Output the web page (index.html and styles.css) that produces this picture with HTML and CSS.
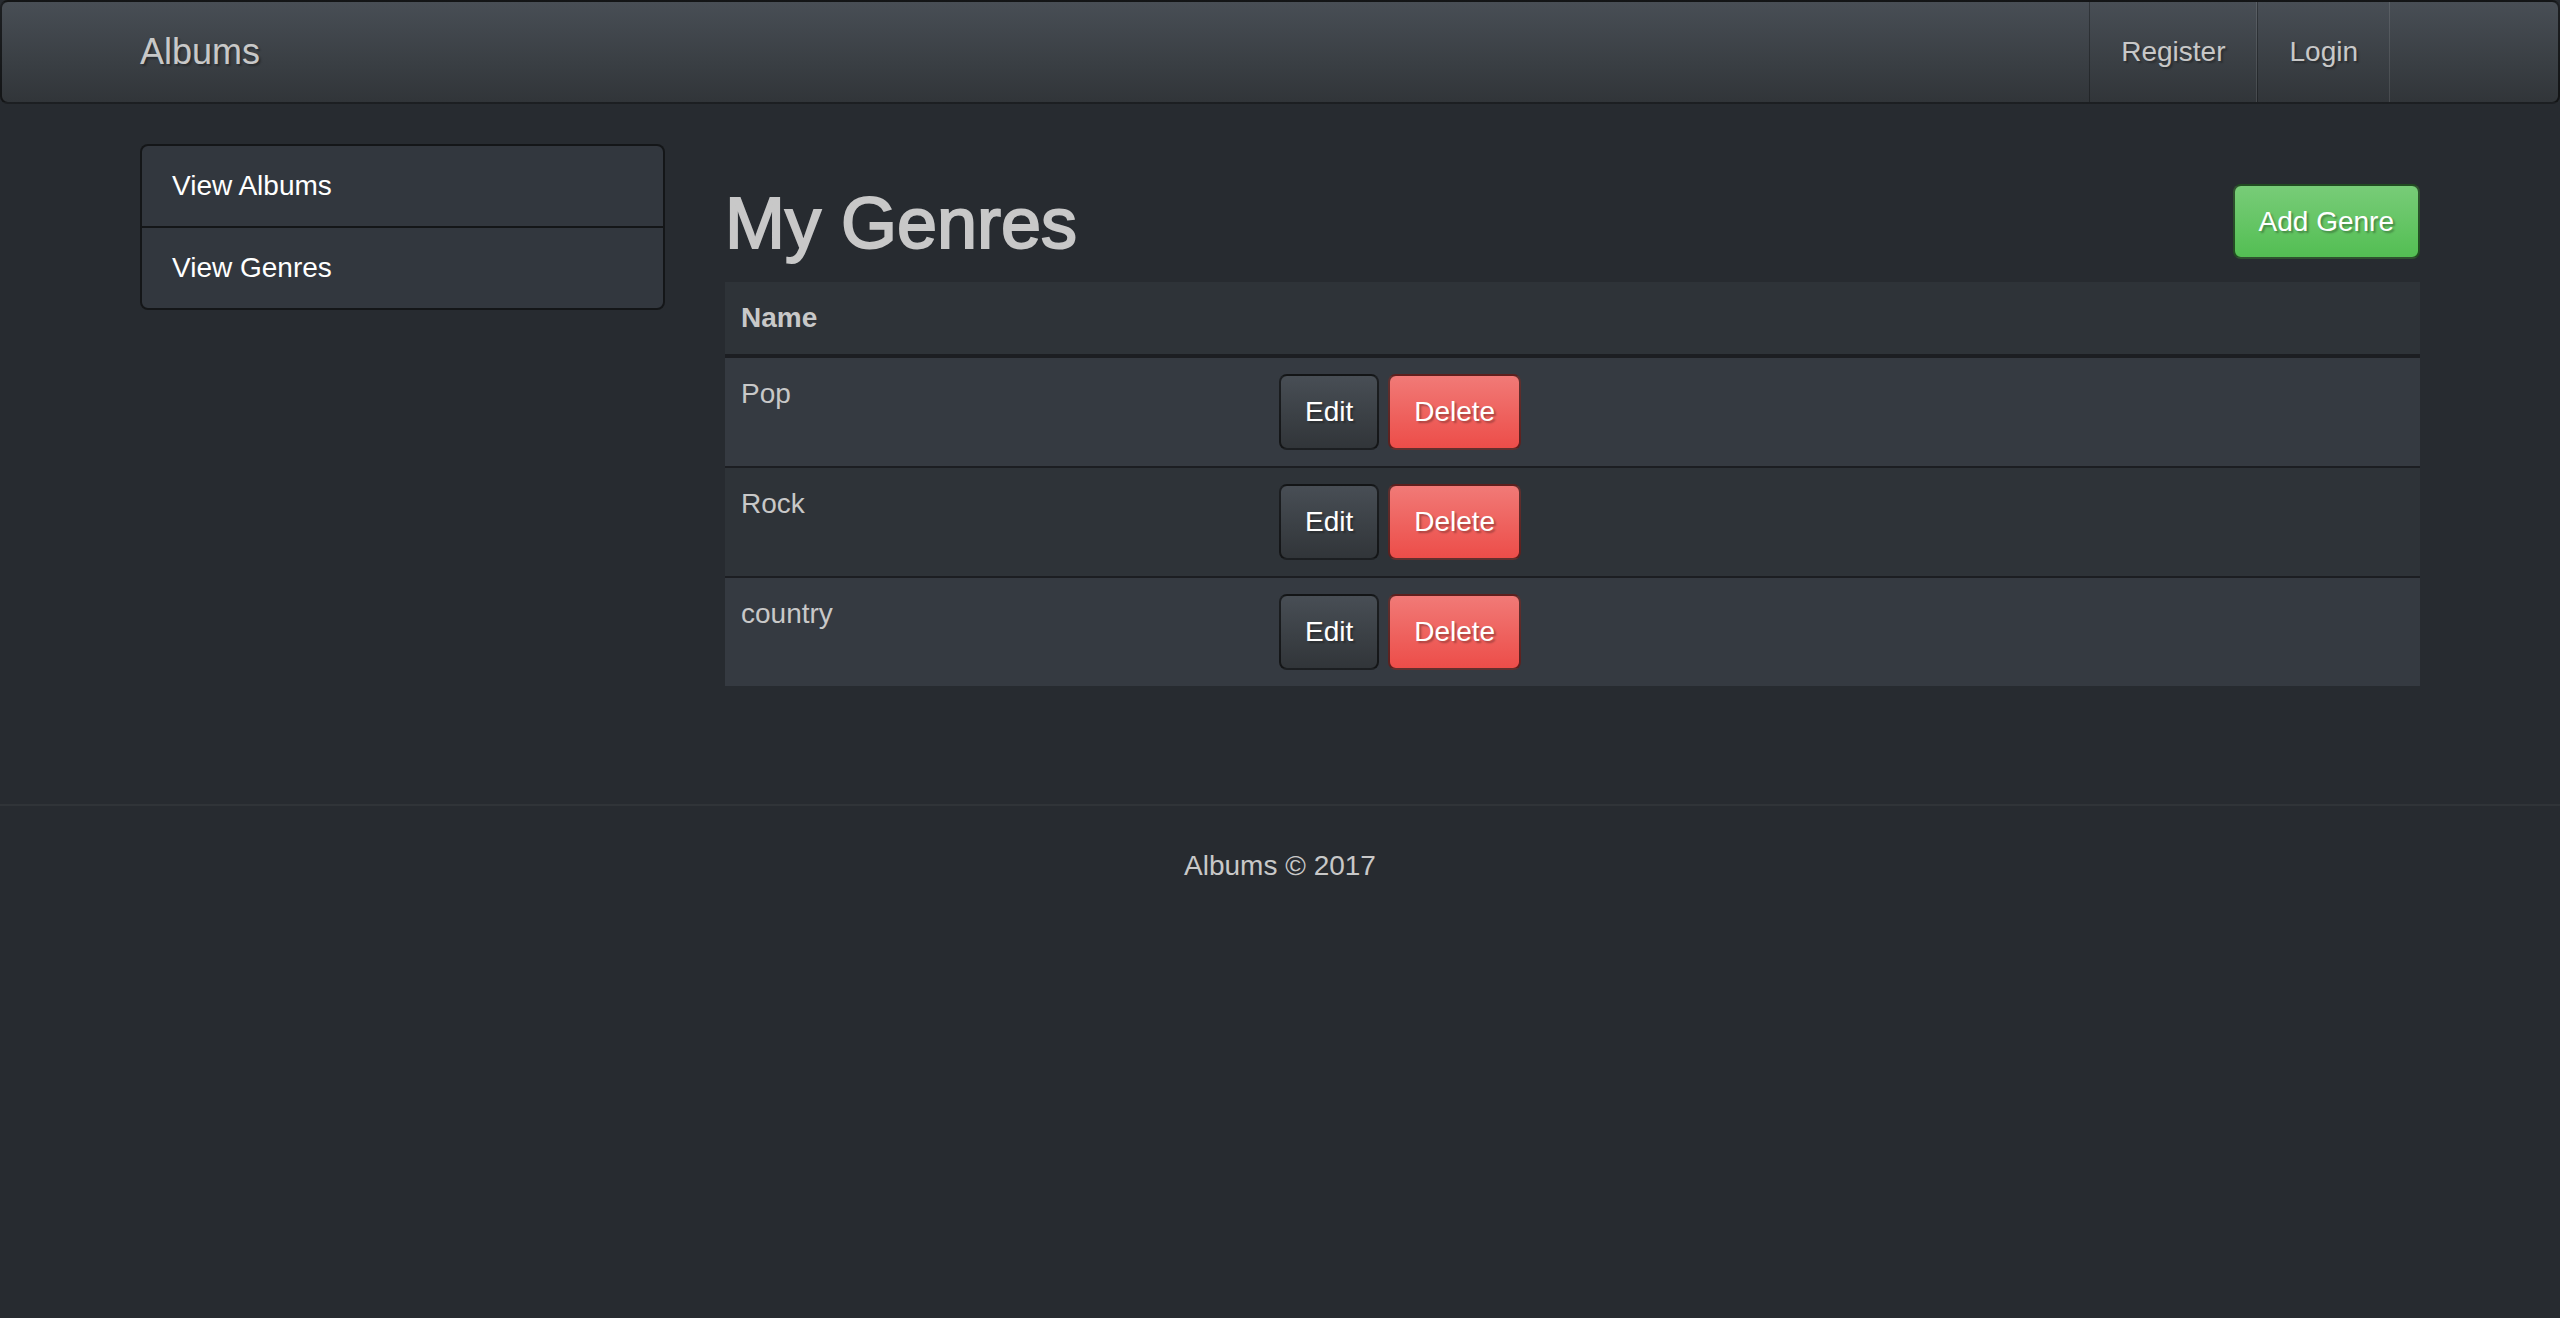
FILE: index.html
```html
<!DOCTYPE html>
<html lang="en">
<head>
<meta charset="utf-8">
<title>Albums</title>
<link rel="stylesheet" href="styles.css">
</head>
<body>
<nav class="navbar">
  <div class="navbar-inner">
    <a class="brand" href="#">Albums</a>
    <ul class="nav">
      <li><a href="#">Register</a></li>
      <li><a href="#">Login</a></li>
    </ul>
  </div>
</nav>
<div class="container">
  <aside class="list-group">
    <a class="list-item" href="#">View Albums</a>
    <a class="list-item" href="#">View Genres</a>
  </aside>
  <main class="main">
    <div class="page-head">
      <h1 class="title">My Genres</h1>
      <a class="btn btn-success" href="#">Add Genre</a>
    </div>
    <table class="table">
      <thead>
        <tr><th class="col-name">Name</th><th></th></tr>
      </thead>
      <tbody>
        <tr><td>Pop</td><td><div class="actions"><a class="btn btn-default" href="#">Edit</a><a class="btn btn-danger" href="#">Delete</a></div></td></tr>
        <tr><td>Rock</td><td><div class="actions"><a class="btn btn-default" href="#">Edit</a><a class="btn btn-danger" href="#">Delete</a></div></td></tr>
        <tr><td>country</td><td><div class="actions"><a class="btn btn-default" href="#">Edit</a><a class="btn btn-danger" href="#">Delete</a></div></td></tr>
      </tbody>
    </table>
  </main>
</div>
<footer class="footer">
  <p class="copy">Albums © 2017</p>
</footer>
</body>
</html>
```

FILE: styles.css
```css
* { box-sizing: border-box; }
html, body { margin: 0; padding: 0; }
body {
  background: #272b30;
  color: #c8c8c8;
  font-family: "Liberation Sans", Arial, Helvetica, sans-serif;
  font-size: 28px;
  line-height: 40px;
}
a { text-decoration: none; }

.navbar {
  height: 104px;
  border: 2px solid rgba(0,0,0,0.6);
  border-radius: 8px;
  background-image: linear-gradient(#484e55, #3a3f44 60%, #313539);
}
.navbar-inner {
  width: 2340px;
  margin: 0 auto;
  padding: 0 30px;
  display: flex;
  justify-content: space-between;
  height: 100px;
}
.brand {
  display: block;
  padding: 30px 30px;
  margin-left: -30px;
  font-size: 36px;
  line-height: 40px;
  color: #c8c8c8;
  text-shadow: 2px 2px 2px rgba(0,0,0,0.3);
}
.nav {
  list-style: none;
  margin: 0 30px 0 0;
  padding: 0;
  display: flex;
}
.nav a {
  display: block;
  padding: 30px 31px;
  line-height: 40px;
  color: #c8c8c8;
  text-shadow: 2px 2px 2px rgba(0,0,0,0.3);
  border-left: 1px solid rgba(0,0,0,0.3);
  border-right: 1px solid rgba(255,255,255,0.1);
}

.container {
  width: 2340px;
  margin: 40px auto 0;
  padding: 0 30px;
  display: grid;
  grid-template-columns: 525px 1fr;
  column-gap: 60px;
  align-items: start;
}

.list-group { display: flex; flex-direction: column; }
.list-item {
  display: block;
  padding: 20px 30px;
  line-height: 40px;
  color: #fff;
  background: #32373e;
  border: 2px solid rgba(0,0,0,0.6);
  margin-bottom: -2px;
}
.list-item:first-child { border-radius: 8px 8px 0 0; }
.list-item:last-child { border-radius: 0 0 8px 8px; margin-bottom: 0; }

.page-head {
  display: flex;
  justify-content: space-between;
  align-items: flex-start;
  margin-top: 40px;
  margin-bottom: 20px;
}
.title {
  margin: 0;
  font-size: 72px;
  line-height: 78px;
  font-weight: 500;
  color: #c8c8c8;
  -webkit-text-stroke: 2px #c8c8c8;
}

.btn {
  display: inline-block;
  padding: 16px 24px;
  line-height: 40px;
  font-size: 28px;
  color: #fff;
  border: 2px solid rgba(0,0,0,0.6);
  border-radius: 8px;
  text-shadow: 2px 2px 2px rgba(0,0,0,0.3);
  white-space: nowrap;
}
.page-head .btn { line-height: 39px; }
.btn-success { background-image: linear-gradient(#78cc78, #62c462 60%, #53be53); }
.btn-default { background-image: linear-gradient(#484e55, #3a3f44 60%, #313539); }
.btn-danger { background-image: linear-gradient(#f17a77, #ee5f5b 60%, #ed4d49); }

.table {
  width: 100%;
  border-collapse: collapse;
  background: #2e3338;
}
.table th {
  text-align: left;
  font-weight: bold;
  padding: 16px;
  vertical-align: bottom;
  border-bottom: 4px solid #1c1e22;
}
.table th.col-name { width: 538px; }
.table td {
  padding: 16px;
  vertical-align: top;
  border-top: 2px solid #1c1e22;
}
.table tbody tr:nth-child(odd) { background: #353a41; }
.actions { display: flex; gap: 9px; }

.footer {
  margin-top: 118px;
  border-top: 2px solid #303438;
  padding-top: 40px;
}
.copy {
  margin: 0;
  text-align: center;
  color: #c8c8c8;
}
```
